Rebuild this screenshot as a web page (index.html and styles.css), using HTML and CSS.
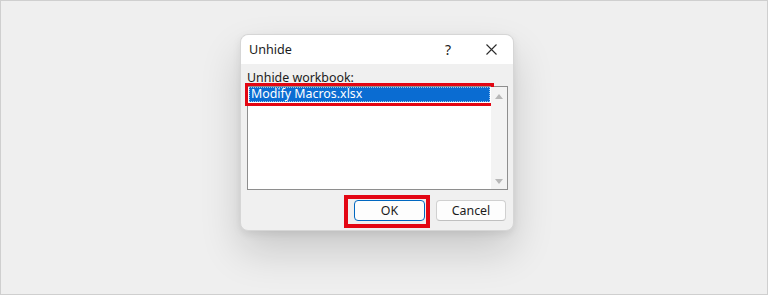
FILE: index.html
```html
<!DOCTYPE html>
<html>
<head>
<meta charset="utf-8">
<link rel="stylesheet" href="styles.css">
</head>
<body>
<div class="page">
  <div class="dialog">
    <div class="titlebar">
      <span class="title">Unhide</span>
      <span class="help">?</span>
      <span class="close">
        <svg width="11" height="11" viewBox="0 0 11 11"><path d="M0.5 0.5 L10.5 10.5 M10.5 0.5 L0.5 10.5" stroke="#2b2b2b" stroke-width="1.1" fill="none"/></svg>
      </span>
    </div>
    <div class="body">
      <div class="label"><u>U</u>nhide workbook:</div>
      <div class="listbox">
        <div class="list">
          <div class="item selected">Modify Macros.xlsx</div>
        </div>
        <div class="scrollbar">
          <span class="arrow up"></span>
          <span class="arrow down"></span>
        </div>
      </div>
      <div class="buttons">
        <button class="btn primary highlighted">OK</button>
        <button class="btn">Cancel</button>
      </div>
    </div>
  </div>
</div>
</body>
</html>
```
FILE: styles.css
```css
* { box-sizing: border-box; }
html, body { margin: 0; padding: 0; }
body { width: 768px; height: 295px; overflow: hidden; }
.page {
  width: 768px;
  height: 295px;
  background: #efefef;
  border: 1px solid #cfcfcf;
  padding: 33px 0 0 239px;
  font-family: "Noto Sans", "Open Sans", sans-serif;
  font-size: 12.4px;
  color: #1b1b1b;
}
.dialog {
  width: 274px;
  border: 1px solid #d6d6d6;
  border-radius: 8px;
  background: #f0f0f0;
  box-shadow: 0 20px 40px rgba(0,0,0,0.16), 0 3px 8px rgba(0,0,0,0.08);
}
.titlebar {
  height: 29px;
  background: #ffffff;
  border-radius: 8px 8px 0 0;
  display: flex;
  align-items: center;
  padding-left: 8px;
}
.title { flex: 1; font-size: 12.6px; line-height: 15px; }
.help { width: 16px; text-align: center; font-size: 14px; margin-right: 30px; color: #222; }
.close { width: 11px; height: 11px; display: flex; margin-right: 16px; }
.body { padding: 6px 5px 9px 6px; }
.label { line-height: 15px; height: 15px; padding-left: 0; white-space: nowrap; }
.label u { text-decoration-thickness: 1px; text-underline-offset: 1px; }
.listbox {
  margin-top: 1px;
  height: 104px;
  border: 1px solid #8e8e8e;
  background: #fff;
  display: flex;
}
.list { flex: 1; padding: 0 0 0 1px; }
.item {
  height: 15px;
  padding-left: 1px;
  margin-right: 1px;
  white-space: nowrap;
}
.item.selected {
  background: #0a6cd2;
  color: #fff;
  border: 1px dotted #9cc5ef;
  line-height: 12px;
  outline: 3px solid #e30613;
  outline-offset: 1px;
}
.scrollbar {
  width: 16px;
  background: #f3f3f3;
  display: flex;
  flex-direction: column;
  justify-content: space-between;
  align-items: center;
  padding: 7px 0 5px;
}
.arrow { width: 0; height: 0; border-left: 4px solid transparent; border-right: 4px solid transparent; }
.arrow.up { border-bottom: 5px solid #b8b8b8; }
.arrow.down { border-top: 5px solid #b8b8b8; }
.buttons {
  margin-top: 10px;
  display: flex;
  justify-content: flex-end;
  gap: 11px;
  padding-right: 2px;
}
.btn {
  height: 21px;
  width: 70px;
  border: 1px solid #d0d0d0;
  border-bottom-color: #c0c0c0;
  border-radius: 4px;
  background: #fdfdfd;
  font-family: inherit;
  font-size: 12.4px;
  color: #1b1b1b;
  padding: 0;
}
.btn.primary { width: 71px; border: 1px solid #0067c0; }
.highlighted { position: relative; }
.highlighted::after {
  content: "";
  position: absolute;
  top: -6px;
  bottom: -8px;
  left: -11px;
  right: -6px;
  border: 4px solid #e30613;
}
```
